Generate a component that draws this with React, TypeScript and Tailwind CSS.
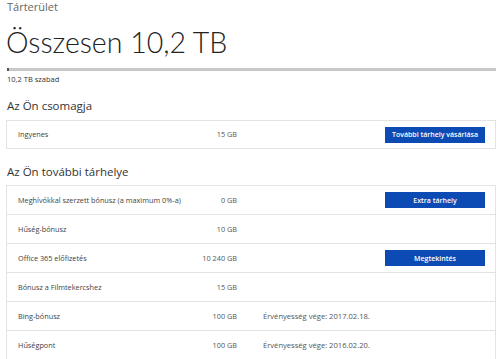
import React from "react";

type Row = { label: string; value: string; note?: string; button?: string };

const rows: Row[] = [
  { label: "Meghívókkal szerzett bónusz (a maximum 0%-a)", value: "0 GB", button: "Extra tárhely" },
  { label: "Hűség-bónusz", value: "10 GB" },
  { label: "Office 365 előfizetés", value: "10 240 GB", button: "Megtekintés" },
  { label: "Bónusz a Filmtekercshez", value: "15 GB" },
  { label: "Bing-bónusz", value: "100 GB", note: "Érvényesség vége: 2017.02.18." },
  { label: "Hűségpont", value: "100 GB", note: "Érvényesség vége: 2016.02.20." },
];

function RowView({ r, last, h }: { r: Row; last?: boolean; h: string }) {
  return (
    <div
      className={
        "flex items-center pl-[11px] pr-[10px] " +
        h +
        (last ? "" : " border-b border-[#e3e3e3]")
      }
    >
      <div className="w-[219px] flex-none flex justify-between text-[7.3px] leading-[11px]">
        <span className="text-[#3f3f3f]">{r.label}</span>
        <span className="text-[#555]">{r.value}</span>
      </div>
      {r.note ? (
        <span className="ml-[26px] text-[7.6px] leading-[11px] text-[#555]">{r.note}</span>
      ) : null}
      {r.button ? (
        <div className="ml-auto w-[100px] h-[16px] bg-[#0c4bb3] text-white text-[7px] font-semibold flex items-center justify-center leading-none">
          {r.button}
        </div>
      ) : null}
    </div>
  );
}

export default function App() {
  return (
    <div className="w-[500px] h-[359px] bg-white overflow-hidden pl-[6px] pr-[4px] font-['Open_Sans','Noto_Sans',sans-serif]">
      <div className="h-[14px] text-[11px] leading-[14px] text-[#666] pl-[1px]">Tárterület</div>
      <div className="mt-[10px] h-[36px] text-[28.5px] leading-[36px] font-light text-[#222] font-['Lato',sans-serif]">Összesen 10,2 TB</div>
      <div className="mt-[8px] h-[3px] bg-[#c8c8c8] flex ml-[1px]">
        <div className="w-[2px] h-full bg-[#555]" />
      </div>
      <div className="mt-[3px] h-[11px] text-[7.5px] leading-[11px] text-[#333] pl-[1px]">10,2 TB szabad</div>
      <div className="mt-[13px] h-[16px] text-[11.5px] leading-[16px] text-[#333] pl-[1px]">Az Ön csomagja</div>
      <div className="mt-[6px] border border-[#e3e3e3]">
        <RowView h="h-[27px]" r={{ label: "Ingyenes", value: "15 GB", button: "További tárhely vásárlása" }} last />
      </div>
      <div className="mt-[15px] h-[16px] text-[11.5px] leading-[16px] text-[#333] pl-[1px]">Az Ön további tárhelye</div>
      <div className="mt-[5px] border border-[#e3e3e3]">
        {rows.map((r, i) => (
          <RowView key={i} h={i === rows.length - 1 ? "h-[28px]" : "h-[29px]"} r={r} last={i === rows.length - 1} />
        ))}
      </div>
    </div>
  );
}
